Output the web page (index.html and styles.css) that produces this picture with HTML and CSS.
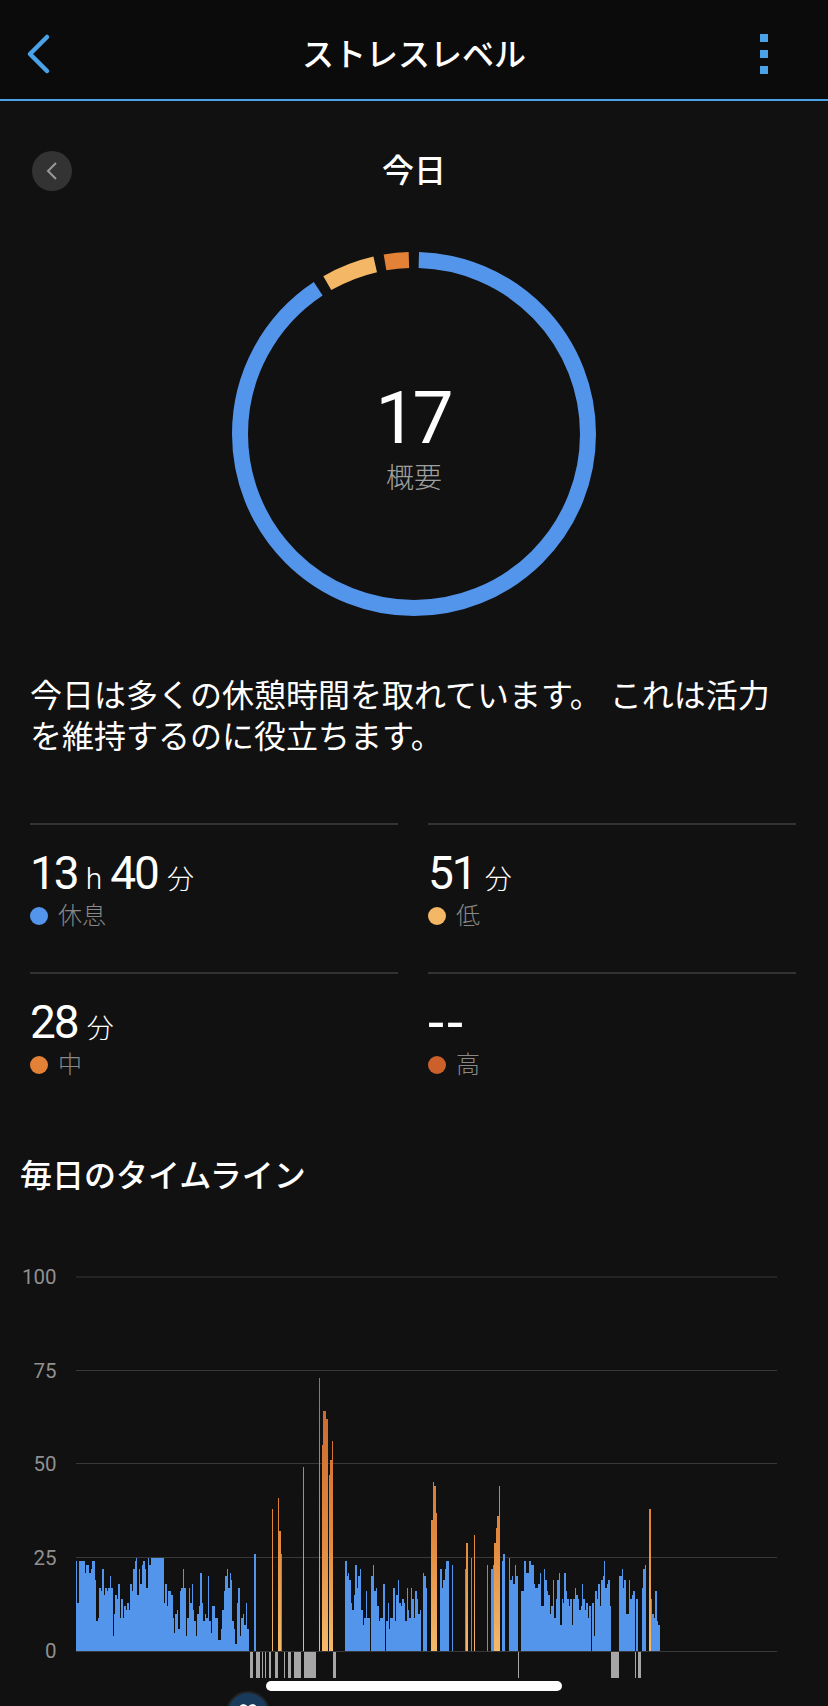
FILE: index.html
```html
<!DOCTYPE html>
<html lang="ja">
<head>
  <meta charset="UTF-8" />
  <title>ストレスレベル</title>
  <meta name="viewport" content="width=device-width, initial-scale=1.0" />
  <link rel="stylesheet" href="styles.css">
</head>
<body>
  <header class="topbar">
    <svg class="topbar-back" width="30" height="44" viewBox="0 0 30 44">
      <polyline points="24,5 7,22 24,39"></polyline>
    </svg>
    <h1>ストレスレベル</h1>
    <div class="topbar-menu"><span></span><span></span><span></span></div>
  </header>

  <div class="day-row">
    <button class="day-prev">
      <svg width="14" height="20" viewBox="0 0 14 20"><polyline points="11,2 3,10 11,18"></polyline></svg>
    </button>
    <h2>今日</h2>
    <div></div>
  </div>

  <div class="ring">
    <svg width="364" height="364" viewBox="0 0 364 364">
      <!-- angles in degrees, clockwise from the top -->
      <g transform="rotate(-90 182 182)" fill="none" stroke-width="16">
        <circle cx="182" cy="182" r="174" pathLength="360" stroke="#5495ec" stroke-dasharray="325 35" stroke-dashoffset="-1.6"></circle>
        <circle cx="182" cy="182" r="174" pathLength="360" stroke="#f4b766" stroke-dasharray="17 343" stroke-dashoffset="-330.1"></circle>
        <circle cx="182" cy="182" r="174" pathLength="360" stroke="#e38136" stroke-dasharray="7.9 352.1" stroke-dashoffset="-350.4"></circle>
      </g>
    </svg>
    <div class="ring-text">
      <div class="ring-value">17</div>
      <div class="ring-label">概要</div>
    </div>
  </div>

  <p class="message">今日は多くの休憩時間を取れています。 これは活力を維持するのに役立ちます。</p>

  <div class="stats">
    <div class="stat">
      <div class="stat-value">13<small class="unit-h">h</small>40<small>分</small></div>
      <div class="stat-label"><i class="dot dot-rest"></i>休息</div>
    </div>
    <div class="stat">
      <div class="stat-value">51<small>分</small></div>
      <div class="stat-label"><i class="dot dot-low"></i>低</div>
    </div>
    <div class="stat">
      <div class="stat-value">28<small>分</small></div>
      <div class="stat-label"><i class="dot dot-mid"></i>中</div>
    </div>
    <div class="stat">
      <div class="stat-value stat-empty">--</div>
      <div class="stat-label"><i class="dot dot-high"></i>高</div>
    </div>
  </div>

  <h2 class="section-title">毎日のタイムライン</h2>

  <svg id="chart" class="chart" width="828" height="511" viewBox="0 1195 828 511">
    <defs>
      <linearGradient id="stressFill" gradientUnits="userSpaceOnUse" x1="0" y1="1651" x2="0" y2="1378">
        <stop offset="0" stop-color="#f5b96a"></stop>
        <stop offset="0.4" stop-color="#e38a3e"></stop>
        <stop offset="1" stop-color="#c8622c"></stop>
      </linearGradient>
    </defs>
    <g class="grid">
      <line x1="76" x2="777" y1="1277" y2="1277"></line>
      <line x1="76" x2="777" y1="1370.5" y2="1370.5"></line>
      <line x1="76" x2="777" y1="1463.5" y2="1463.5"></line>
      <line x1="76" x2="777" y1="1557.5" y2="1557.5"></line>
    </g>
    <g class="axis">
      <text x="56.5" y="1284">100</text>
      <text x="56.5" y="1377.5">75</text>
      <text x="56.5" y="1471">50</text>
      <text x="56.5" y="1564.5">25</text>
      <text x="56.5" y="1658">0</text>
    </g>
    <g id="bars"></g>
    <g class="grid"><line x1="76" x2="777" y1="1651.5" y2="1651.5"></line></g>
  </svg>

  <div class="tab-icon">
    <svg width="24" height="14" viewBox="0 0 24 14"><path d="M12 4C10 0 3 0 3 6c0 3 2 6 4 8h10c2-2 4-5 4-8 0-6-7-6-9-2z"></path></svg>
  </div>
  <div class="home-bar"></div>

  <script src="chart.js"></script>
</body>
</html>
```

FILE: styles.css
```css
* {
  box-sizing: border-box;
}
html, body {
  margin: 0;
  height: 1706px;
  overflow: hidden;
}
body {
  position: relative;
  background-color: #111;
  color: #fff;
  font-family: Roboto, "Noto Sans CJK JP", sans-serif;
}
h1, h2, p {
  margin: 0;
}

.topbar {
  height: 101px;
  background: #0b0b0b;
  border-bottom: 2px solid #4aa3e8;
  display: grid;
  grid-template-columns: 1fr auto 1fr;
  align-items: center;
  padding: 0 60px 1px 60px;
}
.topbar h1 {
  font-size: 32px;
  font-weight: 500;
  line-height: 40px;
  margin-top: 12px;
}
.topbar-back {
  margin: 10px 0 0 -37px;
}
.topbar-back polyline {
  fill: none;
  stroke: #4aa3e8;
  stroke-width: 4.5;
  stroke-linecap: round;
  stroke-linejoin: round;
}
.topbar-menu {
  display: flex;
  flex-direction: column;
  gap: 8px;
  margin-top: 9px;
  justify-self: end;
}
.topbar-menu span {
  display: block;
  width: 8px;
  height: 8px;
  background: #4aa3e8;
}

.day-row {
  display: grid;
  grid-template-columns: 1fr auto 1fr;
  align-items: center;
  padding: 0 32px;
  margin-top: 50px;
}
.day-row h2 {
  font-size: 32px;
  font-weight: 500;
  line-height: 40px;
}
.day-prev {
  width: 40px;
  height: 40px;
  padding: 0;
  border: none;
  border-radius: 50%;
  background: #333;
  display: flex;
  align-items: center;
  justify-content: center;
}
.day-prev polyline {
  fill: none;
  stroke: #999;
  stroke-width: 2;
}

.ring {
  display: grid;
  width: 364px;
  height: 364px;
  margin: 61px auto 0;
}
.ring > * {
  grid-area: 1 / 1;
}
.ring-text {
  text-align: center;
  padding-top: 124px;
}
.ring-value {
  font-size: 73px;
  font-weight: 400;
  line-height: 84px;
  letter-spacing: -4px;
  margin-left: -3px;
}
.ring-label {
  font-size: 28px;
  line-height: 37px;
  font-weight: 300;
  color: #a0a0a0;
}

.message {
  margin: 60px 30px 0;
  font-size: 32px;
  line-height: 41px;
}

.stats {
  display: grid;
  grid-template-columns: 368px 368px;
  column-gap: 30px;
  margin: 65px 0 0 30px;
}
.stat {
  height: 149px;
  border-top: 2px solid #333;
  padding-top: 23px;
}
.stat-value {
  font-size: 46px;
  font-weight: 400;
  line-height: 50px;
  height: 50px;
  letter-spacing: -2px;
  display: flex;
  align-items: baseline;
}
.stat-value small {
  font-size: 27px;
  font-weight: 300;
  margin-left: 9px;
  letter-spacing: 0;
}
.stat-value .unit-h {
  font-size: 30px;
  margin: 0 8px 0 8px;
}
.stat-empty {
  font-size: 58px;
  letter-spacing: 3px;
}
.stat-label {
  display: flex;
  align-items: center;
  gap: 10px;
  font-size: 24px;
  line-height: 30px;
  font-weight: 300;
  color: #888;
  margin-top: 3px;
}
.dot {
  width: 18px;
  height: 18px;
  border-radius: 50%;
}
.dot-rest { background: #5495ec; }
.dot-low { background: #f4b766; }
.dot-mid { background: #e38136; }
.dot-high { background: #cb602a; }

.section-title {
  font-size: 32px;
  font-weight: 500;
  line-height: 38px;
  margin: 36px 0 0 20px;
}

.chart {
  display: block;
}
.grid line {
  stroke: #383838;
  stroke-width: 1;
}
.axis text {
  font-size: 20.5px;
  fill: #909090;
  text-anchor: end;
}
#bars rect {
  shape-rendering: crispEdges;
}

.tab-icon {
  position: absolute;
  left: 226px;
  top: 1691px;
  width: 44px;
  height: 44px;
  border-radius: 50%;
  background: #1a3a5c;
  border: 2px solid #222;
  display: flex;
  justify-content: center;
  padding-top: 10px;
}
.tab-icon path {
  fill: #fff;
}
.home-bar {
  position: absolute;
  left: 266px;
  top: 1681px;
  width: 296px;
  height: 10px;
  border-radius: 5px;
  background: #fff;
}
```

FILE: chart.js
```js
// runs read off the reference: [end x, top y], each starting where the last one ended
// y is in the same units as the x, 3 per pixel, from the origin of the block
const BLOCKS = [
  { x: 70, start: 18, runs: [[21,48],[27,174],[45,48],[48,84],[57,60],[63,84],[66,72],[75,48],[78,105],[84,228],[87,219],[93,129],[96,138],[102,72],[105,150],[111,129],[114,138],[120,129],[123,93],[129,129],[132,273],[135,207],[141,150],[144,162],[150,117],[153,219],[159,162],[162,219],[168,183],[171,195],[177,174],[180,195],[186,117],[189,138],[195,72],[198,48],[201,39],[207,150],[210,72],[216,117],[219,60],[225,48],[228,72],[234,129],[237,39],[243,60],[282,39],[285,174],[291,117],[294,183],[303,138],[309,150],[312,219],[315,264],[321,207],[324,195],[330,252],[333,138],[339,129],[342,72],[348,129],[351,273],[357,219],[360,129],[366,174],[369,117],[372,195],[378,228],[381,273],[387,207],[390,183]] },
  { x: 200, start: 0, runs: [[6,84],[9,174],[15,228],[18,207],[24,219],[27,93],[33,228],[36,264],[45,183],[54,219],[63,285],[66,252],[72,195],[75,138],[81,93],[84,72],[90,129],[93,84],[96,105],[102,228],[105,252],[111,297],[114,174],[120,129],[123,273],[129,219],[132,207],[138,240],[141,174],[147,252],[162,0],[168,27],[243,0],[246,27]] },
  { x: 340, start: 15, runs: [[21,48],[24,93],[27,84],[33,105],[36,174],[42,195],[45,150],[51,60],[54,129],[60,93],[63,72],[69,195],[72,240],[78,219],[81,138],[90,219],[93,0],[99,93],[102,60],[108,138],[111,129],[117,183],[120,228],[129,219],[135,117],[138,0],[144,228],[147,174],[150,252],[159,219],[165,129],[168,228],[174,150],[177,105],[183,174],[186,183],[192,162],[195,174],[201,228],[204,129],[207,195],[213,219],[216,129],[222,162],[225,219],[231,138],[234,162],[240,207],[243,195],[249,0],[252,84],[258,93],[261,129],[300,0],[306,72],[309,129],[315,105],[318,72],[327,48],[336,0],[339,60],[375,0],[378,72]] },
  { x: 470, start: 3, runs: [[6,39],[51,0],[54,60],[63,0],[69,72],[72,60],[96,0],[99,48],[105,27],[117,0],[120,39],[126,105],[129,93],[135,117],[138,60],[144,93],[153,0],[162,138],[168,48],[177,84],[183,48],[192,60],[195,117],[204,129],[210,117],[213,84],[222,183],[225,72],[231,105],[234,138],[240,150],[243,207],[249,183],[252,105],[258,219],[261,162],[267,105],[270,84],[276,240],[279,162],[282,174],[288,84],[291,138],[297,162],[300,183],[306,162],[309,240],[315,162],[318,129],[324,150],[327,162],[333,195],[336,183],[339,117],[345,162],[348,195],[354,174],[357,219],[363,183],[366,0],[372,174],[375,273],[381,138],[384,162],[390,117]] },
  { x: 560, start: 120, runs: [[123,183],[129,105],[132,93],[135,48],[141,129],[144,117],[150,105],[153,183],[177,0],[186,93],[189,72],[192,129],[198,105],[207,207],[210,105],[216,162],[219,150],[225,138],[228,0],[234,162],[246,0],[249,129],[255,72],[258,60],[273,0],[276,162],[282,207],[285,219],[291,138],[294,228],[300,240]] }
];

// [from x, to x, top y]
const STRESS = [
  [272,273,1509],[278,279,1498],[279,281,1531],[303,304,1467],[319,320,1378],[322,323,1445],
  [323,326,1411],[326,328,1419],[329,330,1475],[330,332,1460],[332,333,1441],[431,433,1520],
  [433,434,1482],[434,436,1486],[436,437,1513],[466,468,1543],[474,475,1535],[494,496,1543],
  [496,497,1528],[497,499,1516],[499,500,1486],[649,651,1509]
];

// stretches without a reading
const GAPS = [
  [250,253],[256,260],[262,263],[265,266],[269,271],[275,278],[284,285],[288,291],[294,301],
  [304,316],[333,336],[518,519],[611,619],[635,636],[638,641]
];

const BASE = 1651;
const bars = document.getElementById("bars");

function addRect(x, y, w, h, fill) {
  const r = document.createElementNS("http://www.w3.org/2000/svg", "rect");
  r.setAttribute("x", x);
  r.setAttribute("y", y);
  r.setAttribute("width", w);
  r.setAttribute("height", h);
  r.setAttribute("fill", fill);
  bars.appendChild(r);
}

BLOCKS.forEach(block => {
  let from = block.start;
  block.runs.forEach(([to, top]) => {
    if (top > 0) {
      const y = 1545 + top / 3;
      addRect(block.x + from / 3, y, (to - from) / 3, BASE - y, "#5495ec");
    }
    from = to;
  });
});

STRESS.forEach(([a, b, top]) => addRect(a, top, b - a, BASE - top, "url(#stressFill)"));
GAPS.forEach(([a, b]) => addRect(a, BASE, b - a, 27, "#a6a6a6"));
```
